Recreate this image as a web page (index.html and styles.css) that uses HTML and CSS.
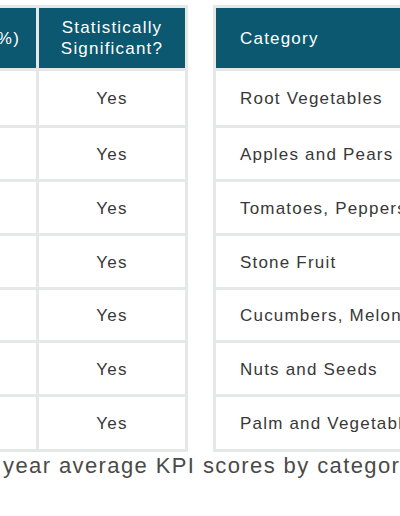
FILE: index.html
```html
<!DOCTYPE html>
<html lang="en">
<head>
<meta charset="utf-8">
<title>KPI scores by category</title>
<link rel="stylesheet" href="styles.css">
</head>
<body>
<div class="page">
  <div class="tables">
    <table class="grid grid-left">
      <thead>
        <tr>
          <th class="col-pct">(%)</th>
          <th class="col-sig">Statistically<br>Significant?</th>
        </tr>
      </thead>
      <tbody>
        <tr class="row-first"><td class="col-pct"></td><td class="col-sig">Yes</td></tr>
        <tr><td class="col-pct"></td><td class="col-sig">Yes</td></tr>
        <tr><td class="col-pct"></td><td class="col-sig">Yes</td></tr>
        <tr><td class="col-pct"></td><td class="col-sig">Yes</td></tr>
        <tr class="row-short"><td class="col-pct"></td><td class="col-sig">Yes</td></tr>
        <tr><td class="col-pct"></td><td class="col-sig">Yes</td></tr>
        <tr class="row-last"><td class="col-pct"></td><td class="col-sig">Yes</td></tr>
      </tbody>
    </table>
    <table class="grid grid-right">
      <thead>
        <tr><th class="col-cat">Category</th></tr>
      </thead>
      <tbody>
        <tr class="row-first"><td class="col-cat">Root Vegetables</td></tr>
        <tr><td class="col-cat">Apples and Pears</td></tr>
        <tr><td class="col-cat">Tomatoes, Peppers</td></tr>
        <tr><td class="col-cat">Stone Fruit</td></tr>
        <tr class="row-short"><td class="col-cat">Cucumbers, Melons</td></tr>
        <tr><td class="col-cat">Nuts and Seeds</td></tr>
        <tr class="row-last"><td class="col-cat">Palm and Vegetable Oils</td></tr>
      </tbody>
    </table>
  </div>
  <p class="caption">year average KPI scores by category</p>
</div>
</body>
</html>
```

FILE: styles.css
```css
html, body {
  margin: 0;
  padding: 0;
  background: #ffffff;
}

body {
  width: 400px;
  height: 516px;
  overflow: hidden;
  font-family: "Liberation Sans", Arial, Helvetica, sans-serif;
  color: #383838;
}

.page {
  padding-top: 5px;
}

.tables {
  display: flex;
  align-items: flex-start;
  gap: 25px;
  margin-left: -63px;
  width: 800px;
}

.grid {
  border-collapse: separate;
  border-spacing: 3px;
  background: #e6e7e7;
  font-size: 17px;
  letter-spacing: 1.2px;
  flex: none;
}

.grid th,
.grid td {
  padding: 0;
  vertical-align: middle;
  white-space: nowrap;
}

.grid th {
  background: #0b5870;
  color: #ffffff;
  font-weight: normal;
  height: 60px;
  line-height: 21px;
}

.grid td {
  background: #ffffff;
  height: 49px;
  padding-top: 2px;
}

.grid .row-first td {
  height: 52px;
}

.grid .row-short td {
  height: 48px;
}

.grid .row-last td {
  height: 50px;
}

.col-pct {
  width: 96px;
  text-align: right;
  box-sizing: border-box;
}

.grid th.col-pct {
  padding-right: 16px;
}

.col-sig {
  width: 146px;
  text-align: center;
}

.grid-right {
  width: 300px;
}

.col-cat {
  text-align: left;
}

.grid th.col-cat,
.grid td.col-cat {
  padding-left: 24px;
}

.caption {
  margin: 2px 0 0 3px;
  font-size: 22px;
  line-height: 24px;
  letter-spacing: 1.4px;
  color: #4a4a4a;
  white-space: nowrap;
}
```
